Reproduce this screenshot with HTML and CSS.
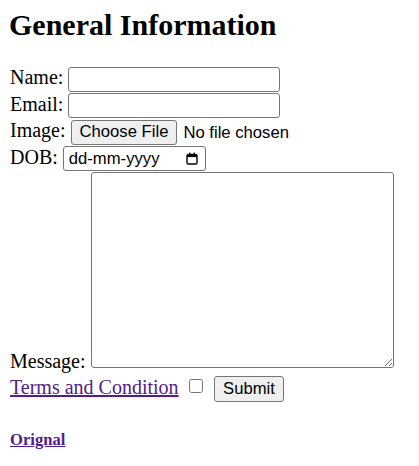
FILE: index.html
```html
<!DOCTYPE html>
<html>
<head>
<meta charset="utf-8">
<title>General Information</title>
<link rel="stylesheet" href="styles.css">
</head>
<body>
<h1 class="title">General Information</h1>
<form class="form">
<label class="lbl">Name: <input class="field" type="text"></label><br>
<label class="lbl">Email: <input class="field" type="email"></label><br>
<label class="lbl">Image: <input class="file" type="file"></label><br>
<label class="lbl">DOB: <span class="date"><input class="date-text" type="text" placeholder="dd-mm-yyyy"><svg class="cal" width="12" height="13" viewBox="0 0 12 13" aria-hidden="true"><rect x="1" y="2.5" width="10" height="9.5" rx="1.2" fill="none" stroke="#000" stroke-width="1.4"/><rect x="1" y="2.5" width="10" height="2.6" fill="#000"/><rect x="3" y="0.6" width="1.4" height="2.4" fill="#000"/><rect x="7.6" y="0.6" width="1.4" height="2.4" fill="#000"/></svg></span></label><br>
<label class="lbl">Message: <textarea class="msg"></textarea></label><br>
<a class="link" href="#terms">Terms and Condition</a> <input class="check" type="checkbox"> <button class="btn" type="submit">Submit</button>
</form>
<h4 class="orig"><a class="link" href="#orig">Orignal</a></h4>
</body>
</html>
```
FILE: styles.css
```css
body {
  margin: 8px;
  font-family: "Liberation Serif", serif;
  font-size: 20px;
  color: #000;
  background: #fff;
}
.title {
  font-size: 30px;
  font-weight: bold;
  margin: 0 0 0 1px;
  line-height: 34px;
}
.form {
  margin: 24px 0 0 2px;
}
.field {
  box-sizing: border-box;
  width: 212px;
  height: 25px;
  border: 1px solid #767676;
  border-radius: 3px;
  padding: 1px 3px;
  font-family: "Liberation Sans", sans-serif;
  font-size: 16.67px;
  margin: 0 0 1px;
  background: #fff;
}
.file {
  font-family: "Liberation Sans", sans-serif;
  font-size: 16.67px;
  margin: 0 0 1px;
}
.file::file-selector-button {
  font-family: "Liberation Sans", sans-serif;
  font-size: 16.67px;
  background: #efefef;
  border: 1px solid #767676;
  border-radius: 3px;
  padding: 1px 8px;
  margin-right: 6px;
  height: 25px;
  color: #000;
}
.date {
  display: inline-flex;
  align-items: center;
  box-sizing: border-box;
  width: 143px;
  height: 25px;
  border: 1px solid #767676;
  border-radius: 3px;
  padding: 0 7px 0 5px;
  margin: 0 0 1px;
  background: #fff;
}
.date-text {
  width: 110px;
  border: 0;
  padding: 0;
  margin: 0;
  font-family: "Liberation Sans", sans-serif;
  font-size: 16.67px;
  outline: none;
  background: transparent;
}
.date-text::placeholder {
  color: #000;
  opacity: 1;
}
.cal {
  margin-left: auto;
  display: block;
}
.msg {
  box-sizing: border-box;
  width: 303px;
  height: 196px;
  border: 1px solid #767676;
  border-radius: 3px;
  margin: 0;
  vertical-align: baseline;
}
.link {
  color: #551a8b;
}
.check {
  margin: 3px 4px 3px 5px;
  width: 14px;
  height: 14px;
  vertical-align: 1px;
}
.btn {
  font-family: "Liberation Sans", sans-serif;
  font-size: 16.67px;
  background: #efefef;
  border: 1px solid #767676;
  border-radius: 3px;
  padding: 1px 8.5px;
  height: 26px;
  color: #000;
  margin: 3px 0 0 2px;
}
.orig {
  margin: 28px 0 0 2px;
  font-size: 16.6px;
}
```
